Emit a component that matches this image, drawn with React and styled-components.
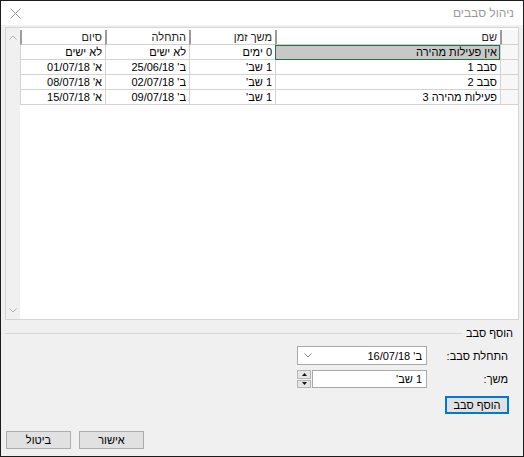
import React from 'react';
import styled, { createGlobalStyle } from 'styled-components';

const GlobalStyle = createGlobalStyle`
  html, body {
    margin: 0;
    padding: 0;
    background: #ffffff;
  }
  * {
    box-sizing: border-box;
  }
`;

const rounds = [
  { name: 'אין פעילות מהירה', duration: '0 ימים', start: 'לא ישים', end: 'לא ישים', selected: true },
  { name: 'סבב 1', duration: "1 שב'", start: "ב' 25/06/18", end: "א' 01/07/18" },
  { name: 'סבב 2', duration: "1 שב'", start: "ב' 02/07/18", end: "א' 08/07/18" },
  { name: 'פעילות מהירה 3', duration: "1 שב'", start: "ב' 09/07/18", end: "א' 15/07/18" },
];

const Window = styled.div`
  width: 524px;
  height: 457px;
  border: 1px solid #1c1c1c;
  background: #f0f0f0;
  direction: rtl;
  font-family: "Liberation Sans", "DejaVu Sans", sans-serif;
  font-size: 11px;
  color: #000;
  display: flex;
  flex-direction: column;
`;

const TitleBar = styled.div`
  height: 24px;
  background: #ffffff;
  display: flex;
  align-items: center;
  justify-content: space-between;
  padding: 0 9px 0 8px;
  flex-shrink: 0;
`;

const Title = styled.div`
  font-size: 12px;
  color: #9a9a9a;
`;

const CloseButton = styled.div`
  width: 12px;
  height: 12px;
  display: flex;
  align-items: center;
  justify-content: center;
`;

const Body = styled.div`
  flex: 1;
  display: flex;
  flex-direction: column;
  padding: 2px 4px 0 4px;
`;

const GridFrame = styled.div`
  height: 293px;
  border: 1px solid #d4d4d4;
  background: #ffffff;
  display: flex;
  flex-direction: row;
`;

const TableArea = styled.div`
  flex: 1;
  padding-top: 2px;
`;

const Table = styled.div`
  display: grid;
  grid-template-columns: 18px 225px 86px 84px 1fr;
  grid-auto-rows: 15px;
`;

const HeadCell = styled.div`
  display: flex;
  align-items: center;
  padding: 0 3px;
  border-left: 2px solid #9c9c9c;
  border-bottom: 1px solid #d0d0d0;
  background: ${p => (p.$corner ? '#f7f7f7' : '#ffffff')};
  color: #222;
  white-space: nowrap;
  overflow: hidden;
`;

const Cell = styled.div`
  display: flex;
  align-items: center;
  padding: 0 3px;
  white-space: nowrap;
  overflow: hidden;
  border-left: 1px solid #d3d3d3;
  border-bottom: 1px solid #d3d3d3;
  background: ${p => (p.$selected ? '#c8c8c8' : p.$rowHead ? '#f7f7f7' : '#ffffff')};
  ${p => p.$selected && 'outline: 1px solid #217346; outline-offset: -1px;'}
`;

const ScrollBar = styled.div`
  width: 14px;
  background: #f0f0f0;
  display: flex;
  flex-direction: column;
  justify-content: space-between;
  align-items: center;
  padding: 7px 0 6px;
`;

const GroupHeader = styled.div`
  margin-top: 6px;
  height: 14px;
  display: flex;
  align-items: center;
  gap: 4px;
  padding-right: 6px;
`;

const GroupLabel = styled.div`
  font-size: 11px;
  color: #000;
`;

const GroupLine = styled.div`
  flex: 1;
  height: 1px;
  background: #d8d8d8;
`;

const FormRow = styled.div`
  margin-top: ${p => p.$gap}px;
  height: ${p => p.$height}px;
  display: flex;
  align-items: center;
  padding-right: 10px;
`;

const Label = styled.div`
  width: 82px;
  padding-right: 1px;
`;

const DateBox = styled.div`
  width: 130px;
  height: 19px;
  border: 1px solid #a9a9a9;
  background: #ffffff;
  display: flex;
  align-items: center;
  justify-content: space-between;
  padding: 0 4px 0 6px;
`;

const TextBox = styled.div`
  width: 115px;
  height: 18px;
  border: 1px solid #a9a9a9;
  background: #ffffff;
  display: flex;
  align-items: center;
  padding: 0 4px;
`;

const Spinner = styled.div`
  width: 14px;
  height: 18px;
  margin-right: 1px;
  display: flex;
  flex-direction: column;
  gap: 1px;
`;

const SpinButton = styled.div`
  flex: 1;
  background: #e6e6e6;
  border: 1px solid #b4b4b4;
  display: flex;
  align-items: center;
  justify-content: center;
`;

const Button = styled.div`
  width: ${p => p.$width}px;
  height: 18px;
  background: #e1e1e1;
  border: 1px solid ${p => (p.$default ? '#0078d7' : '#adadad')};
  ${p => p.$default && 'box-shadow: inset 0 0 0 1px #0078d7;'}
  display: flex;
  align-items: center;
  justify-content: center;
  font-size: 11px;
`;

const ButtonRow = styled.div`
  margin-top: ${p => p.$gap}px;
  display: flex;
  justify-content: ${p => (p.$end ? 'flex-end' : 'flex-start')};
  gap: 8px;
  padding: ${p => (p.$end ? '0 0 0 1px' : '0 10px 0 0')};
`;

function Chevron({ up, color = '#8a8a8a' }) {
  return (
    <svg width="8" height="5" viewBox="0 0 8 5">
      <polyline
        points={up ? '0.5,4.5 4,1 7.5,4.5' : '0.5,0.5 4,4 7.5,0.5'}
        fill="none"
        stroke={color}
        strokeWidth="1"
      />
    </svg>
  );
}

function Triangle({ up }) {
  return (
    <svg width="5" height="3" viewBox="0 0 5 3">
      <polygon points={up ? '0,3 2.5,0 5,3' : '0,0 2.5,3 5,0'} fill="#111" />
    </svg>
  );
}

export default function App() {
  return (
    <>
      <GlobalStyle />
      <Window>
        <TitleBar>
          <Title>ניהול סבבים</Title>
          <CloseButton>
            <svg width="11" height="11" viewBox="0 0 11 11">
              <path d="M0.5 0.5 L10.5 10.5 M10.5 0.5 L0.5 10.5" stroke="#9a9a9a" strokeWidth="1" />
            </svg>
          </CloseButton>
        </TitleBar>
        <Body>
          <GridFrame>
            <TableArea>
              <Table>
                <HeadCell $corner />
                <HeadCell>שם</HeadCell>
                <HeadCell>משך זמן</HeadCell>
                <HeadCell>התחלה</HeadCell>
                <HeadCell>סיום</HeadCell>
                {rounds.map((r, i) => (
                  <React.Fragment key={i}>
                    <Cell $rowHead />
                    <Cell $selected={r.selected}>{r.name}</Cell>
                    <Cell>{r.duration}</Cell>
                    <Cell>{r.start}</Cell>
                    <Cell>{r.end}</Cell>
                  </React.Fragment>
                ))}
              </Table>
            </TableArea>
            <ScrollBar>
              <Chevron up color="#b0b0b0" />
              <Chevron color="#b0b0b0" />
            </ScrollBar>
          </GridFrame>

          <GroupHeader>
            <GroupLabel>הוסף סבב</GroupLabel>
            <GroupLine />
          </GroupHeader>

          <FormRow $gap={6} $height={19}>
            <Label>התחלת סבב:</Label>
            <DateBox>
              <span>ב' 16/07/18</span>
              <Chevron />
            </DateBox>
          </FormRow>

          <FormRow $gap={5} $height={18}>
            <Label>משך:</Label>
            <TextBox>1 שב'</TextBox>
            <Spinner>
              <SpinButton><Triangle up /></SpinButton>
              <SpinButton><Triangle /></SpinButton>
            </Spinner>
          </FormRow>

          <ButtonRow $gap={8}>
            <Button $width={64} $default>הוסף סבב</Button>
          </ButtonRow>

          <ButtonRow $gap={17} $end>
            <Button $width={65}>אישור</Button>
            <Button $width={65}>ביטול</Button>
          </ButtonRow>
        </Body>
      </Window>
    </>
  );
}
